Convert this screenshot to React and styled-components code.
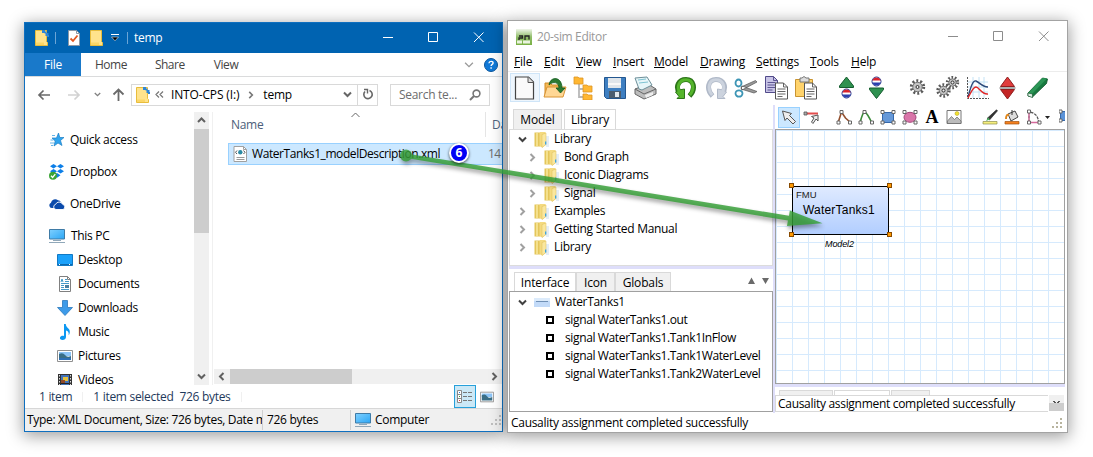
import React from "react";
import styled, { createGlobalStyle } from "styled-components";

const Global = createGlobalStyle`
  * { box-sizing: border-box; }
  body { margin: 0; background: #fff; overflow: hidden; font: 12px/16px "Open Sans", "Noto Sans", sans-serif; color: #000; }
  svg { display: block; flex: none; }
`;

const Stage = styled.main`
  position: relative; width: 1093px; height: 457px; padding: 20px 0 0 24px;
  display: flex; gap: 4px; align-items: flex-start; overflow: hidden;
`;
const Txt = styled.span`
  white-space: pre; letter-spacing: ${(p) => p.$ls ?? -0.3}px; color: ${(p) => p.$c || "inherit"};
  margin-left: ${(p) => p.$ml || 0}px; flex: none;
`;

/* ---------- file explorer ---------- */
const Explorer = styled.section`
  width: 479px; height: 410px; margin-top: 2px; background: #fff; border: 1px solid #0f6fbf;
  display: flex; flex-direction: column; overflow: hidden; box-shadow: 0 3px 15px 1px rgba(0,0,0,.38);
`;
const ExTitle = styled.header`
  height: 30px; background: #0063b1; color: #fff; display: flex; align-items: center; padding-left: 10px; flex: none;
`;
const Spacer = styled.div`flex: 1;`;
const Controls = styled.div`display: flex; align-items: center; padding-right: ${(p) => p.$r}px;`;
const Ribbon = styled.nav`
  height: 24px; border-bottom: 1px solid #dadbdc; display: flex; align-items: stretch; color: #444; flex: none; line-height: 24px;
`;
const FileTab = styled.div`width: 56px; background: #1979ca; color: #fff; text-align: center;`;
const RibbonTab = styled.div`margin-left: ${(p) => p.$ml}px;`;
const AddressRow = styled.div`height: 35px; display: flex; align-items: center; padding-left: 12px; flex: none;`;
const AddressBox = styled.div`
  width: 247px; height: 22px; border: 1px solid #d9d9d9; margin-left: 6px; display: flex; align-items: center; padding-left: 4px;
`;
const Refresh = styled.div`width: 20px; height: 20px; border-left: 1px solid #d9d9d9; display: grid; place-items: center;`;
const SearchBox = styled.div`
  width: 100px; height: 22px; border: 1px solid #d9d9d9; margin-left: 12px; display: flex; align-items: center;
  padding: 0 8px; justify-content: space-between; color: #6d6d6d;
`;
const Split = styled.div`height: 273px; display: flex; flex: none;`;
const NavPane = styled.div`width: 169px; overflow: hidden; padding-top: 12px;`;
const NavRow = styled.div`
  height: ${(p) => p.$h}px; display: flex; align-items: center; gap: 5px; padding: ${(p) => p.$pt || 0}px 0 0 ${(p) => (p.$sub ? 32 : 24)}px;
`;
const VBar = styled.div`width: 15px; background: #f0f0f0; display: flex; flex-direction: column; align-items: center;`;
const VThumb = styled.div`width: 15px; height: 104px; background: #cdcdcd; align-self: flex-start;`;
const BarButton = styled.div`width: 15px; height: 17px; display: grid; place-items: center; flex: none;`;
const FilePane = styled.div`flex: 1; margin-left: 3px; border-left: 1px solid #f0f0f0; display: flex; flex-direction: column; min-width: 0;`;
const ColumnHead = styled.div`
  height: 31px; display: flex; color: #4c607a; padding-left: 18px; position: relative; flex: none; overflow: hidden;
`;
const HeadCell = styled.div`width: ${(p) => p.$w}px; border-right: 1px solid #e5e5e5; height: 25px; line-height: 26px; flex: none;`;
const SortMark = styled.svg`position: absolute; left: 138px; top: 0;`;
const FileRow = styled.div`
  margin-left: 15px; height: 22px; background: #cce8ff; border: 1px solid #99d1ff; border-right: 0;
  display: flex; align-items: center; padding-left: 4px; flex: none; overflow: hidden;
`;
const FileName = styled.div`width: 240px; flex: none; display: flex;`;
const HBar = styled.div`height: 15px; margin: auto 0 1px 1px; background: #f0f0f0; display: flex; align-items: center;`;
const HThumb = styled.div`width: 122px; height: 15px; background: #cdcdcd; margin-left: 1px;`;
const InfoRow = styled.div`
  height: 23px; display: flex; align-items: center; color: #1e395b; padding: 0 8px 0 14px; flex: none;
`;
const Tick = styled.div`width: 1px; height: ${(p) => p.$h || 10}px; background: ${(p) => p.$c || "#f0f0f0"}; margin-left: ${(p) => p.$ml || 0}px; flex: none;`;
const ViewButton = styled.div`
  width: 22px; height: 23px; border: 1px solid #26a0da; background: #cbe8f6; display: grid; place-items: center; margin-right: 4px;
`;
const StatusRow = styled.div`flex: 1; background: #f0f0f0; border-top: 1px solid #d7d7d7; display: flex; align-items: center;`;
const Clip = styled.div`width: ${(p) => p.$w}px; padding-left: ${(p) => p.$pl}px; overflow: hidden; display: flex; flex: none;`;

/* ---------- 20-sim editor ---------- */
const Editor = styled.section`
  width: 561px; height: 413px; background: #fff; border: 1px solid #a3a3a3; display: flex; flex-direction: column;
  box-shadow: 0 3px 15px 1px rgba(0,0,0,.38); overflow: hidden;
`;
const EdTitle = styled.header`height: 31px; display: flex; align-items: center; padding-left: 8px; color: #999; flex: none;`;
const MenuBar = styled.nav`height: 20px; border-bottom: 1px solid #ececec; display: flex; flex: none; line-height: 20px; padding-left: 6px;`;
const MenuItem = styled.div`width: ${(p) => p.$w}px; letter-spacing: -0.2px; white-space: nowrap; &::first-letter { text-decoration: underline; }`;
const ToolBar = styled.div`height: 33px; display: flex; align-items: flex-start; padding: 1px 0 0 2px; flex: none;`;
const Tool = styled.div`
  width: 30px; height: 29px; display: grid; place-items: center; margin-left: ${(p) => p.$gap || 0}px; flex: none;
  background: ${(p) => (p.$on ? "#eef6fd" : "none")}; box-shadow: ${(p) => (p.$on ? "inset 0 0 0 1px #cfe5f8" : "none")};
`;
const Work = styled.div`height: 308px; display: flex; flex: none;`;
const Left = styled.div`width: 265px; display: flex; flex-direction: column; padding-left: 1px; flex: none;`;
const Tabs = styled.div`display: flex; height: ${(p) => p.$h}px; padding-left: ${(p) => p.$pl}px; gap: ${(p) => p.$gap || 0}px; flex: none; align-items: flex-end;`;
const Tab = styled.div`
  width: ${(p) => p.$w}px; height: ${(p) => p.$h || 19}px; border: 1px solid #d9d9d9; border-bottom: 0; text-align: center; line-height: 20px;
  background: ${(p) => (p.$on ? "#fff" : "#f0f0f0")}; letter-spacing: -0.15px; white-space: nowrap;
`;
const TreeBox = styled.div`height: ${(p) => p.$h}px; border: 1px solid ${(p) => p.$c}; padding-top: ${(p) => p.$pt || 0}px; flex: none;`;
const TreeRow = styled.div`height: 18px; display: flex; align-items: center; padding-left: ${(p) => p.$pl}px;`;
const Splitter = styled.div`height: 3px; background: #dedefa; flex: none;`;
const VSplitter = styled.div`width: 2px; background: #dedefa; flex: none;`;
const Right = styled.div`width: 290px; display: flex; flex-direction: column; overflow: hidden; flex: none;`;
const DrawBar = styled.div`height: 24px; display: flex; align-items: center; padding-left: 3px; flex: none; width: 300px;`;
const DrawTool = styled.div`
  width: 22px; height: 21px; display: grid; place-items: center; margin-left: ${(p) => p.$gap || 0}px; flex: none;
  background: ${(p) => (p.$on ? "#cce8ff" : "none")}; box-shadow: ${(p) => (p.$on ? "inset 0 0 0 1px #99d1ff" : "none")};
`;
const Canvas = styled.div`
  height: 255px; border: 1px solid #a0a0a0; position: relative; flex: none;
  background: repeating-linear-gradient(90deg, #d6eafd 0 1px, transparent 1px 16px),
    repeating-linear-gradient(180deg, #d6eafd 0 1px, transparent 1px 16px);
`;
const Block = styled.div`
  position: absolute; left: 16px; top: 56px; width: 97px; height: 49px; border: 1px solid #000;
  background: linear-gradient(#dfeaff, #b2ceff); font-family: "Liberation Sans", Arial, sans-serif;
`;
const BlockKind = styled.div`font-size: 9.5px; line-height: 10px; padding: 3px 0 0 3px; color: #222;`;
const BlockName = styled.div`font-size: 12px; line-height: 14px; padding: 3px 0 0 10px; letter-spacing: 0.2px;`;
const BlockLabel = styled.div`
  position: absolute; left: 49px; top: 109px; font: italic 9px/11px "Liberation Sans", Arial, sans-serif; letter-spacing: -0.1px;
`;
const Handle = styled.i`
  position: absolute; width: 5px; height: 5px; background: #f90; border: 1px solid #8a4b00;
  left: ${(p) => p.$x}px; top: ${(p) => p.$y}px;
`;
const StubTab = styled.div`width: ${(p) => p.$w}px; height: 5px; border: 1px solid #d9d9d9; border-bottom: 0; background: ${(p) => (p.$on ? "#fff" : "#f0f0f0")};`;
const Output = styled.div`height: 17px; display: flex; flex: none;`;
const OutputText = styled.div`width: 273px; border: 1px solid #d9d9d9; border-right: 0; line-height: 16px; padding-left: 2px;`;
const OutputBar = styled.div`width: 15px; height: 16px; margin-left: 1px; background: linear-gradient(#f0f0f0 8px, #cdcdcd 8px);`;
const EdStatus = styled.footer`flex: 1; display: flex; align-items: center; padding: 1px 4px 0 3px;`;
const Letter = styled.span`font: bold 18px/20px "Liberation Serif", "Times New Roman", serif;`;

/* ---------- annotations ---------- */
const Arrow = styled.svg`position: absolute; left: 0; top: 0; filter: drop-shadow(1px 3px 2px rgba(0,0,0,.45));`;
const Badge = styled.div`
  position: absolute; left: 449px; top: 143px; width: 20px; height: 20px; border-radius: 50%; background: #0000f5; border: 2px solid #fff;
  color: #fff; font: bold 12px/16px "Open Sans", sans-serif; text-align: center; box-shadow: 0 1px 3px rgba(0,0,0,.7);
`;

/* ---------- icons ---------- */
const Svg = ({ w = 16, h = 16, vb, children }) => (
  <svg width={w} height={h} viewBox={vb || `0 0 ${w} ${h}`}>{children}</svg>
);
const Gap = styled.div`width: ${(p) => p.$w}px; flex: none;`;
const Chevron = ({ d, c = "#606060", s = 2, w = 9, h = 9 }) => {
  const paths = { down: "M1 2.5L4.5 6L8 2.5", up: "M1 6L4.5 2.5L8 6", left: "M6.5 1L3 4.5L6.5 8", right: "M2.5 1L6 4.5L2.5 8" };
  return <Svg w={w} h={h} vb="0 0 9 9"><path d={paths[d]} fill="none" stroke={c} strokeWidth={s} /></Svg>;
};
const FolderDoc = ({ dots }) => (
  <Svg w={14} h={16}>
    <path d="M.5.5h11v11l1 1v3H.5z" fill="#ffe38c" stroke="#e8bd3c" />
    <path d="M1 12.500h8v2.500H1z" fill="#fbd666" />
    {dots && <path d="M7 0h3v3H7zM10.500 3h3v3h-3zM9.500 1.500h2v2h-2zM12 5h2v2h-2z" fill="#2f86d6" />}
  </Svg>
);
const CheckDoc = () => (
  <Svg w={12} h={16}><path d="M.5.5h8l3 3v12H.5z" fill="#fff" stroke="#8d99a6" /><path d="M8.500.5v3h3" fill="none" stroke="#8d99a6" /><path d="M2.500 8.500L5 11L9.500 5.500" fill="none" stroke="#e25822" strokeWidth="1.800" /></Svg>
);
const WinButtons = ({ c }) => (
  <Svg w={102} h={12}>
    <path d="M0 5.500h10M45.500.5h9v9h-9zM91 .5l9.500 9.500M100.500.5L91 10" fill="none" stroke={c} />
  </Svg>
);
const Monitor = () => (
  <Svg w={17} h={16}>
    <defs><linearGradient id="mon" x2="1" y2="1"><stop stopColor="#7fd0ff" /><stop offset="1" stopColor="#2ba6f5" /></linearGradient></defs>
    <path d="M.5 1.500h15v9.500H.5z" fill="url(#mon)" stroke="#3f7ba6" /><path d="M6 12h4v1H6z" fill="#9db4c5" /><path d="M4 12.500h8M0 14.500h16" stroke="#90a8b9" />
  </Svg>
);
const Photo = () => (
  <Svg><path d="M.5 2.500h15v11H.5z" fill="#fff" stroke="#909090" /><path d="M2 4h12v4H2z" fill="#8cc4f7" /><path d="M2 6q4-2 6 1t6 1v4H2z" fill="#3a6e86" /><path d="M2 10h12v2H2z" fill="#2f6fb5" /></Svg>
);
const navIcons = {
  star: <Svg><path d="M9.500 1l1.300 4.500H15l-3.500 3 1.500 5-4-2.500L5 14l1.200-5L3 6h4.500z" fill="#2fa4ee" stroke="#1c7ec4" strokeWidth=".7" /><path d="M3 3.500h3M1.500 8h3M1 11h4M2 13.500h2" stroke="#68b6e8" /></Svg>,
  dropbox: <Svg><path d="M4.500 0L8 2.300 4.500 4.600 1 2.300zM11.500 0L15 2.300 11.500 4.600 8 2.300zM4.500 5L8 7.300l-3.500 2.300L1 7.300zM11.500 5L15 7.300l-3.500 2.300L8 7.300zM8 9l3.500 2.300L8 13.800 4.500 11.500z" fill="#0d7fe8" /><circle cx="4" cy="11.700" r="4" fill="#39a435" /><path d="M2 11.700l1.600 1.700 2.700-3.300" fill="none" stroke="#fff" strokeWidth="1.300" /></Svg>,
  cloud: <Svg><path d="M5.500 12H2.800A2.700 2.700 0 0 1 2 6.800 4.200 4.200 0 0 1 9 4.300a4 4 0 0 1 3 2" fill="#0a4aab" /><path d="M7 13.500a2.600 2.600 0 0 1-.4-5.100 3.800 3.800 0 0 1 7-.1 2.700 2.700 0 0 1 .4 5.200z" fill="#0a4aab" stroke="#fff" strokeWidth=".9" /></Svg>,
  pc: <Monitor />,
  desktop: <Svg><path d="M.5 2.500h15v11H.5z" fill="#1ba1fa" stroke="#1179c4" /><path d="M1 12.500h14" stroke="#0d69ad" /><path d="M2 12.500h1M12 12.500h1" stroke="#fff" /></Svg>,
  doc: <Svg><path d="M2.500.5h8l3 3v12h-11z" fill="#fff" stroke="#808080" /><path d="M10.500.5v3h3" fill="none" stroke="#808080" /><path d="M4 6l1-3 1 3M8 3.500h2M8 5.500h4M4 7.500h8M4 9.500h3M4 11.500h3M4 13.500h8" fill="none" stroke="#2e8fc4" strokeWidth=".9" /><path d="M8 9h4v3H8z" fill="#4b7fa0" /></Svg>,
  down: <Svg><path d="M5.500.5h5v7h5L8 15.500.5 7.500h5z" fill="#3d9be9" stroke="#2b79bd" strokeWidth=".8" /></Svg>,
  music: <Svg><path d="M7 0h1.800c0 4 4.200 3.800 4 8 0 1.500-.6 2.700-1.200 3.200.6-2.500-.6-4.300-2.600-4.700V13c0 2-1.700 3-3.400 3S2.500 15 3 13.500s2.300-2.200 4-1.600z" fill="#0c98f2" /></Svg>,
  pic: <Photo />,
  video: <Svg><path d="M1 2h14v14H1z" fill="#333" /><path d="M2.500 3v13M13.500 3v13" stroke="#ddd" strokeDasharray="1.500 1.500" /><path d="M4 3h8v12H4z" fill="#4272b8" /><path d="M6 5h5v4H6z" fill="#e6c13d" /><path d="M4 8h4v3H4z" fill="#8f4b2b" /><path d="M4 11h8v1H4z" fill="#222" /></Svg>,
};
const XmlDoc = () => (
  <Svg w={15} h={16}><path d="M1 .5h9.500l3 3v12H1z" fill="#fff" stroke="#a0a0a0" /><path d="M10.500.5v3h3" fill="none" stroke="#a0a0a0" /><circle cx="7.300" cy="6.300" r="2.200" fill="#2c8aa4" /><path d="M4 4.500L2.500 6.300 4 8M10.500 4.500L12 6.300 10.500 8" fill="none" stroke="#555" /><path d="M3.500 11.500h8M3.500 13.500h8" stroke="#999" /></Svg>
);
const Grip = ({ c }) => (
  <Svg w={11} h={11}><path d="M8 0h2v2H8zM8 4h2v2H8zM8 8h2v2H8zM4 4h2v2H4zM4 8h2v2H4zM0 8h2v2H0z" fill={c} /></Svg>
);
const Folder = () => (
  <Svg w={15} h={17}>
    <path d="M12 5h3v11h-3z" fill="#e3edf7" />
    <path d="M.5 1.500h5l1 1.500v12.500h-6z" fill="#e4c65a" /><path d="M5.500 1h6v13l-3 2.500-3-1.500z" fill="#f4da80" />
    <path d="M8 3.500L12 2v11.500l-4 3z" fill="#fae79e" stroke="#dcbd55" strokeWidth=".5" /><path d="M3 2v13" stroke="#fae99f" strokeWidth="1.500" /><path d="M11 10.500h1.300v3H11z" fill="#3fa3e0" />
  </Svg>
);
const gear = (cx, cy, r) => (
  <g key={`${cx}`}>
    <circle cx={cx} cy={cy} r={r} fill="none" stroke="#5a5a5a" strokeWidth="3.400" strokeDasharray={`${(r * 2 * Math.PI) / 20} ${(r * 2 * Math.PI) / 20}`} />
    <circle cx={cx} cy={cy} r={r - 1.3} fill="#c4c4c4" stroke="#777" /><circle cx={cx} cy={cy} r="1.500" fill="#eee" stroke="#333" />
  </g>
);
const FrenchDot = ({ y }) => (
  <g><circle cx="11.500" cy={y} r="4.500" fill="#fff" stroke="#24348e" /><path d={`M7.400 ${y - 1}a4.300 4.300 0 0 1 8.200 0z`} fill="#d9232c" /><path d={`M7.400 ${y + 1}a4.300 4.300 0 0 0 8.200 0z`} fill="#2b3fae" /></g>
);
const CurlArrow = ({ flip, c, e }) => (
  <Svg w={24} h={24}>
    <g transform={flip ? "matrix(-1 0 0 1 24 0)" : undefined} fill="none">
      <path d="M5.500 17C1 10.500 4.500 3.500 12 3.500S22.500 12.500 15.500 20" stroke={e} strokeWidth="5" />
      <path d="M1.500 16l3.500-2 5.500-1v9.500H3l2-2z" fill={c} stroke={e} />
      <path d="M6.200 17.500C2 10.500 5 3.800 12 3.700s9.500 8.500 3.800 15.300" stroke={c} strokeWidth="3" />
    </g>
  </Svg>
);
const big = (children) => <Svg w={24} h={24}>{children}</Svg>;
const sheet = (x, y, f, s) => <><path d={`M${x} ${y}h8l4 4v12h-12z`} fill={f} stroke={s} /><path d={`M${x + 8} ${y}v4h4M${x + 2} ${y + 6}h8M${x + 2} ${y + 8.500}h8M${x + 2} ${y + 11}h8M${x + 2} ${y + 13.500}h5`} fill="none" stroke={s} strokeWidth=".9" /></>;
const mainTools = [
  { on: 1, i: big(<><path d="M2.500 1h13l5 5v17h-18z" fill="#fafafa" stroke="#444" strokeWidth="1.200" /><path d="M15 1v5.500h5.500" fill="#ddd" stroke="#555" /></>) },
  { i: big(<><path d="M2 21V7h5l2 2h8v3" fill="#f5b956" stroke="#d08a24" /><path d="M4 11h19l-3 10H1z" fill="#ffd795" stroke="#d99435" /><path d="M6 9c1-9 13-9 13 3h3l-4.500 5L13 12h3c0-6-6-7-10-3z" fill="#2b7a33" stroke="#145c1e" strokeWidth=".8" /></>) },
  { i: big(<><path d="M6 8v13h6M6 13h6" fill="none" stroke="#b8b8b8" strokeWidth="1.800" /><path d="M1 1h4l1 1h4v6H1zM10 9h4l1 1h4v6h-9zM10 18h4l1 1h4v5h-9z" fill="#ffb732" stroke="#dd9424" strokeWidth=".8" /></>) },
  { i: big(<><path d="M1.500 1.500h21v21h-19l-2-2z" fill="#3e7fc1" stroke="#23568f" /><path d="M5 2h13v10H5z" fill="#dfe5ea" /><path d="M5 7h13v2H5z" fill="#f8f8f8" /><path d="M6 15h12v7H6z" fill="#4c5d6e" /><path d="M12 16h4v5h-4z" fill="#e3e8ec" /></>) },
  { i: big(<><path d="M2 13l13-5 8 5v5L11 23l-9-5z" fill="#bdbdbd" stroke="#666" /><path d="M2 13l9 5 12-5" fill="none" stroke="#666" /><path d="M6 13L2 2l12-1 5 8-10 5z" fill="#e6f5f8" stroke="#6d8f99" /><path d="M5 4l8-1M6 7l9-1" stroke="#7fc3d2" /><path d="M12 19l8-3v3l-7 3z" fill="#eee" /></>) },
  { gap: 11, i: <CurlArrow c="#55b52c" e="#2c7519" /> },
  { i: <CurlArrow flip c="#ccd3de" e="#b0b9c8" /> },
  { i: big(<><path d="M8 10l15 5.500-3 1.500L7 13zM8 14L23 6l-1.500-1.500L7 11z" fill="#999" stroke="#555" strokeWidth=".7" /><ellipse cx="4.500" cy="7" rx="3" ry="3.500" fill="none" stroke="#3d95b5" strokeWidth="1.800" /><ellipse cx="5" cy="17.500" rx="3.500" ry="3.200" fill="none" stroke="#3d95b5" strokeWidth="1.800" /></>) },
  { i: <Svg w={25} h={24}>{sheet(1.5, 0.5, "#c8c4e6", "#514a8a")}{sheet(11.5, 7, "#fff", "#555")}</Svg> },
  { i: <Svg w={25} h={24}><path d="M1.500 3.500h17v17h-17z" fill="#ffd36b" stroke="#c99431" /><path d="M6 2h2q2-3 4 0h3v4H6z" fill="#ddd" stroke="#777" />{sheet(10.5, 7, "#fff", "#555")}</Svg> },
  { gap: 11, i: big(<><path d="M11.500 1L18.500 10v1.500h-14V10z" fill="#2f9150" stroke="#145c2e" /><FrenchDot y={17.5} /></>) },
  { i: big(<><path d="M11.500 22.500L4.500 13.500V12h14v1.500z" fill="#2f9150" stroke="#145c2e" /><FrenchDot y={5.5} /></>) },
  { gap: 11, i: big(gear(11.5, 11, 6)) },
  { i: big(<>{gear(7.500, 14.500, 5.5)}{gear(16.500, 6.500, 5)}</>) },
  { i: big(<><path d="M1 1h21v21H1z" fill="#fff" /><path d="M7 1v21M13 1v21M18 1v21M1 6h21M1 11h21M1 16h21" stroke="#c3e2f5" /><path d="M1.500 1v21.500H23" fill="none" stroke="#555" strokeDasharray="2 1" /><path d="M2 21C5 10 7 4 10 5s6 6 12 6" fill="none" stroke="#2c4a7b" strokeWidth="1.400" /><path d="M2 22c3-6 5-11 8-11s6 8 12 7" fill="none" stroke="#e02626" strokeWidth="1.400" /></>) },
  { i: big(<><path d="M11.500 1l7 9.500h-14z" fill="#e03c3c" stroke="#8f1f1f" /><path d="M11.500 23l7-9.500h-14z" fill="#c42525" stroke="#8f1f1f" /><path d="M3.500 12h16" stroke="#777" strokeWidth="1.200" /></>) },
  { i: big(<><path d="M2 17L16.500 2l5 1-1 4.500L6.500 21 2 20z" fill="#187a40" stroke="#0d4f27" strokeWidth=".8" /><path d="M2 17L16.500 2l4.500.5L6 18z" fill="#2c9656" /><path d="M2 17l4.500 1v3.500L2 20z" fill="#dceee3" stroke="#0d4f27" strokeWidth=".6" /></>) },
];
const node = (x, y) => <path key={`${x}-${y}`} d={`M${x - 1.500} ${y - 1.500}h3v3h-3z`} fill="#fff" stroke="#666" />;
const corners = <>{node(2.5, 3)}{node(13.5, 3)}{node(2.5, 13.5)}{node(13.5, 13.5)}</>;
const drawTools = [
  { on: 1, i: <Svg><path d="M1.500 2l9 2.500-2 2 6 6-2.500 2.500-6-6-2 2.500z" fill="#eee" stroke="#555" /></Svg> },
  { i: <Svg><path d="M3 4.500h12" stroke="#e34d4d" strokeWidth="2" /><path d="M1 3h3v3H1z" fill="#aaa" stroke="#555" strokeWidth=".8" /><path d="M15 6v6l-2-2-3 4.500-1.500-1.500L11 9 8.500 7.500z" fill="#eee" stroke="#555" /></Svg> },
  { gap: 11, i: <Svg><path d="M2 14L5.500 3l4 6 5 4.500" fill="none" stroke="#93502f" strokeWidth="1.600" />{node(2.5, 13.5)}{node(5.500, 3)}{node(14, 13.5)}</Svg> },
  { i: <Svg><path d="M2 14Q5 2 7 3t7 11" fill="none" stroke="#3b8b3a" strokeWidth="1.600" />{node(2.5, 13.5)}{node(6.5, 3)}{node(14, 13.5)}</Svg> },
  { i: <Svg><path d="M2.500 3.500h11v10h-11z" fill="#6598d8" stroke="#3568ab" />{corners}</Svg> },
  { i: <Svg><ellipse cx="8" cy="8.300" rx="6" ry="5" fill="#d975a9" stroke="#a4477a" />{corners}</Svg> },
  { letter: 1 },
  { i: <Svg><path d="M1 1.500h14v13H1z" fill="#fff" stroke="#777" /><path d="M1.500 12l4-4.500 3 3L11 8l4 4v2.500H1.500z" fill="#bbb" stroke="#666" strokeWidth=".7" /><circle cx="11" cy="4.500" r="2" fill="#f3e12f" stroke="#a89b20" strokeWidth=".5" /></Svg> },
  { gap: 14, i: <Svg><path d="M5 9.500L14.500.8 15.500 1.800 7.500 11z" fill="#333" stroke="#222" strokeWidth=".6" /><path d="M4 12L6 8.500l2 2z" fill="#4fae63" /><path d="M1 12.500h14v2.500H1z" fill="#f6ef7d" stroke="#8c8c4c" strokeWidth=".7" /></Svg> },
  { i: <Svg><path d="M4 5l7-3 3 6-7 4z" fill="#ddd" stroke="#444" /><path d="M2 10q0-5 3-4" fill="none" stroke="#e2871b" strokeWidth="2" /><path d="M8 1v5" stroke="#333" /><path d="M1 12.500h14v2.500H1z" fill="#f5811f" stroke="#a5510c" strokeWidth=".7" /></Svg> },
  { i: <Svg><path d="M3 13.500V3q9 1 9.500 10" fill="none" stroke="#555" strokeWidth="1.300" strokeDasharray="3 1" /><path d="M3 3.500v10h10" fill="none" stroke="#d56a9c" strokeWidth="1.300" />{node(3, 2.5)}{node(3, 13.5)}{node(13.5, 13.5)}</Svg> },
];

const nav = [
  ["star", "Quick access"], ["dropbox", "Dropbox"], ["cloud", "OneDrive"], ["pc", "This PC"],
  ["desktop", "Desktop"], ["doc", "Documents"], ["down", "Downloads"], ["music", "Music"], ["pic", "Pictures"], ["video", "Videos"],
];
const navHeight = (i) => (i < 3 ? 32 : i === 3 ? 28 : 24);
const menus = [["File", 30], ["Edit", 32], ["View", 37], ["Insert", 41], ["Model", 46], ["Drawing", 56], ["Settings", 54], ["Tools", 41], ["Help", 40]];
const library = [["Library", 0, 1], ["Bond Graph", 1], ["Iconic Diagrams", 1], ["Signal", 1], ["Examples", 0], ["Getting Started Manual", 0], ["Library", 0]];
const signals = ["out", "Tank1InFlow", "Tank1WaterLevel", "Tank2WaterLevel"];

function ExplorerWindow() {
  return (
    <Explorer>
      <ExTitle>
        <FolderDoc dots /><Gap $w={6} /><Tick $h={12} $c="#6ba5d6" /><Gap $w={12} />
        <CheckDoc /><Gap $w={10} /><FolderDoc /><Gap $w={7} />
        <Svg w={8} h={8}><path d="M0 .5h8" stroke="#fff" /><path d="M.5 3h7L4 6.800z" fill="#000" stroke="#dfe9f2" strokeWidth=".6" /></Svg>
        <Gap $w={8} /><Tick $h={12} $c="#6ba5d6" /><Txt $ml={6} $ls={-0.3}>temp</Txt>
        <Spacer /><Controls $r={17}><WinButtons c="#fff" /></Controls>
      </ExTitle>
      <Ribbon>
        <FileTab><Txt>File</Txt></FileTab>
        <RibbonTab $ml={14}><Txt $ls={-0.5}>Home</Txt></RibbonTab><RibbonTab $ml={28}><Txt $ls={-0.5}>Share</Txt></RibbonTab><RibbonTab $ml={29}><Txt $ls={-0.4}>View</Txt></RibbonTab>
        <Spacer />
        <Controls $r={4}><Chevron d="down" c="#9a9a9a" s={1.2} w={10} h={10} /><Gap $w={10} />
          <Svg w={14} h={14}><circle cx="7" cy="7" r="6.500" fill="#1079d8" stroke="#0b569c" /><path d="M4.900 5.300q.2-1.900 2.200-1.900t2 1.700c0 1.300-2 1.400-2 3M7.100 9.300v1.400" fill="none" stroke="#fff" strokeWidth="1.400" /></Svg>
        </Controls>
      </Ribbon>
      <AddressRow>
        <Svg w={14} h={12}><path d="M13 6H2M6.500 1.500L2 6l4.500 4.500" fill="none" stroke="#6a6a6a" strokeWidth="1.700" /></Svg><Gap $w={16} />
        <Svg w={14} h={12}><path d="M1 6h11M7.500 1.500L12 6l-4.500 4.500" fill="none" stroke="#d2d2d2" strokeWidth="1.700" /></Svg><Gap $w={13} />
        <Chevron d="down" c="#808080" s={1.7} w={7} h={7} /><Gap $w={11} />
        <Svg w={13} h={13}><path d="M6.500 13V1.500M1.500 6.500l5-5 5 5" fill="none" stroke="#6a6a6a" strokeWidth="1.800" /></Svg>
        <AddressBox>
          <FolderDoc dots /><Gap $w={5} />
          <Svg w={9} h={9}><path d="M4 1.500L1 4.500l3 3M8 1.500L5 4.500l3 3" fill="none" stroke="#777" strokeWidth="1.200" /></Svg>
          <Txt $ml={7} $ls={-0.15}>INTO-CPS (I:)</Txt><Gap $w={8} /><Chevron d="right" w={8} h={8} s={1.8} c="#777" /><Txt $ml={8} $ls={-0.2}>temp</Txt>
          <Spacer /><Chevron d="down" c="#666" s={2} /><Gap $w={5} />
          <Refresh><Svg w={12} h={13}><path d="M7.500 2.500A4.200 4.200 0 1 1 3 3.500" fill="none" stroke="#666" strokeWidth="1.600" /><path d="M2 1.500h3.500V5.500" fill="none" stroke="#666" strokeWidth="1.400" /></Svg></Refresh>
        </AddressBox>
        <SearchBox><Txt $ls={-0.3}>Search te...</Txt><Svg w={12} h={12}><circle cx="7.500" cy="4.500" r="3.400" fill="none" stroke="#777" strokeWidth="1.600" /><path d="M5 7L1 11" stroke="#777" strokeWidth="2" /></Svg></SearchBox>
      </AddressRow>
      <Split>
        <NavPane>
          {nav.map(([k, t], i) => <NavRow key={t} $h={navHeight(i)} $pt={i === 3 ? 4 : 0} $sub={i > 3}>{navIcons[k]}<Txt>{t}</Txt></NavRow>)}
        </NavPane>
        <VBar><BarButton><Chevron d="up" /></BarButton><VThumb /><Spacer /><BarButton><Chevron d="down" /></BarButton></VBar>
        <FilePane>
          <ColumnHead>
            <HeadCell $w={255}><Txt>Name</Txt></HeadCell><HeadCell $w={60}><Txt $ml={6}>Date</Txt></HeadCell>
            <SortMark width="9" height="6"><path d="M.5 5L4.500 1L8.500 5" fill="none" stroke="#666" /></SortMark>
          </ColumnHead>
          <FileRow><XmlDoc /><FileName><Txt $ml={4} $ls={-0.42}>WaterTanks1_modelDescription.xml</Txt></FileName><Txt $c="#6d6d6d" $ls={-0.5}>14</Txt></FileRow>
          <HBar><BarButton><Chevron d="left" /></BarButton><HThumb /><Spacer /><BarButton><Chevron d="right" /></BarButton></HBar>
        </FilePane>
      </Split>
      <InfoRow>
        <Txt>1 item</Txt><Tick $ml={10} /><Txt $ml={10}>1 item selected</Txt><Txt $ml={6}>726 bytes</Txt><Tick $ml={10} /><Spacer />
        <ViewButton><Svg w={16} h={14}><path d="M.5.5h4v12h-4zM.5 4.500h4M.5 8.500h4" fill="#fff" stroke="#888" /><path d="M2 2.500h1" stroke="#2b7fd0" /><path d="M2 6.500h1" stroke="#3a9a3a" /><path d="M2 10.500h1" stroke="#e33" /><path d="M6 2.500h10M6 6.500h10M6 10.500h10" stroke="#777" strokeDasharray="4 1" /></Svg></ViewButton>
        <Svg w={14} h={12} vb="0 2 16 12"><path d="M.5 2.500h15v11H.5z" fill="#fff" stroke="#909090" /><path d="M2 4h12v4H2z" fill="#8cc4f7" /><path d="M2 6q4-2 6 1t6 1v4H2z" fill="#3a6e86" /></Svg>
      </InfoRow>
      <StatusRow>
        <Clip $w={237} $pl={2}><Txt $ls={-0.33}>Type: XML Document, Size: 726 bytes, Date m</Txt></Clip><Tick $h={20} $c="#d0d0d0" />
        <Clip $w={87} $pl={4}><Txt>726 bytes</Txt></Clip><Tick $h={20} $c="#d0d0d0" /><Gap $w={4} /><Monitor /><Txt $ml={3}>Computer</Txt>
        <Spacer /><Grip c="#bfbfbf" />
      </StatusRow>
    </Explorer>
  );
}

function EditorWindow() {
  return (
    <Editor>
      <EdTitle>
        <Svg><defs><linearGradient id="logo" y2="1" x2="0"><stop stopColor="#eef5e8" /><stop offset=".5" stopColor="#8fbd68" /><stop offset="1" stopColor="#79b043" /></linearGradient></defs><path d="M0 0h16v16H0z" fill="url(#logo)" /><path d="M3 7h3.500v2H3v2M9 11V7h4v3.500" fill="none" stroke="#222" strokeWidth="1.300" /><path d="M1 11.500h5v3H1zM7 11.500h7v3H7z" fill="#eaf3df" /></Svg>
        <Txt $ml={5} $ls={-0.35}>20-sim Editor</Txt><Spacer /><Controls $r={17}><WinButtons c="#8c8c8c" /></Controls>
      </EdTitle>
      <MenuBar>{menus.map(([m, w]) => <MenuItem key={m} $w={w}>{m}</MenuItem>)}</MenuBar>
      <ToolBar>
        {mainTools.map((t, k) => <Tool key={k} $on={t.on} $gap={t.gap}>{t.i}</Tool>)}
      </ToolBar>
      <Work>
        <Left>
          <Tabs $h={24} $pl={4} $gap={2}><Tab $w={49} $h={20}>Model</Tab><Tab $w={52} $h={20} $on>Library</Tab></Tabs>
          <TreeBox $h={137} $c="#dcdcdc">
            {library.map(([t, lvl, open], k) => (
              <TreeRow key={k} $pl={8 + lvl * 10}>
                <Chevron d={open ? "down" : "right"} c={open ? "#404040" : "#a0a0a0"} /><Gap $w={7} /><Folder /><Txt $ml={5}>{t}</Txt>
              </TreeRow>
            ))}
          </TreeBox>
          <Splitter />
          <Tabs $h={22} $pl={5}>
            <Tab $w={62} $on>Interface</Tab><Tab $w={39}>Icon</Tab><Tab $w={56}>Globals</Tab><Spacer />
            <Svg w={26} h={16}><path d="M1 9h7L4.500 2.500zM15 3h7l-3.500 6z" fill="#6a6a6a" /></Svg>
          </Tabs>
          <TreeBox $h={121} $c="#a0a0a0" $pt={1}>
            <TreeRow $pl={8}><Chevron d="down" c="#404040" /><Gap $w={7} /><Svg><path d="M0 4h16v9H0z" fill="#c2daf8" /><path d="M0 4h16v3H0z" fill="#dcebfb" /><path d="M2 7.500h12" stroke="#7090b5" /></Svg><Txt $ml={5}>WaterTanks1</Txt></TreeRow>
            {signals.map((s) => (
              <TreeRow key={s} $pl={36}><Svg w={8} h={8}><path d="M1 1h6v6H1z" fill="#fff" stroke="#000" strokeWidth="2" /></Svg><Txt $ml={11} $ls={-0.37}>{`signal WaterTanks1.${s}`}</Txt></TreeRow>
            ))}
          </TreeBox>
        </Left>
        <VSplitter />
        <Right>
          <DrawBar>
            {drawTools.map((t, k) => (
              <DrawTool key={k} $on={t.on} $gap={t.gap}>{t.letter ? <Letter>A</Letter> : t.i}</DrawTool>
            ))}
            <Svg w={6} h={5}><path d="M0 1h5L2.500 4z" fill="#222" /></Svg><Gap $w={8} />
            <Svg w={16} h={16}><path d="M6 8h9v8H6z" fill="#164a75" /><path d="M1.500 2.500h13v9h-13z" fill="#5b93d8" stroke="#3568ab" />{node(1.5, 2.5)}{node(1.5, 11.5)}</Svg>
          </DrawBar>
          <Canvas>
            <Block><BlockKind>FMU</BlockKind><BlockName>WaterTanks1</BlockName></Block>
            <Handle $x={13} $y={53} /><Handle $x={111} $y={53} /><Handle $x={13} $y={102} /><Handle $x={111} $y={102} />
            <BlockLabel>Model2</BlockLabel>
          </Canvas>
          <Splitter />
          <Tabs $h={8} $pl={4} $gap={1}><StubTab $w={54} /><StubTab $w={56} $on /><StubTab $w={39} /></Tabs>
          <Output><OutputText><Txt>Causality assignment completed successfully</Txt></OutputText>
            <OutputBar><Svg w={15} h={16}><path d="M4 6.500h2M9 6.500h2M5 7.500h2M8 7.500h2" stroke="#555" /></Svg></OutputBar></Output>
        </Right>
      </Work>
      <EdStatus><Txt>Causality assignment completed successfully</Txt><Spacer /><Grip c="#b8b49f" /></EdStatus>
    </Editor>
  );
}

export default function App() {
  return (
    <>
      <Global />
      <Stage>
        <ExplorerWindow />
        <EditorWindow />
        <Arrow width="1093" height="457">
          <g opacity=".82" fill="#359f36"><path d="M406 153.500L789 215.800l.8-5.300L822.500 223.300 787 226l.9-5.500L406 158z" /><circle cx="406" cy="155.500" r="6" /></g>
        </Arrow>
        <Badge>6</Badge>
      </Stage>
    </>
  );
}
